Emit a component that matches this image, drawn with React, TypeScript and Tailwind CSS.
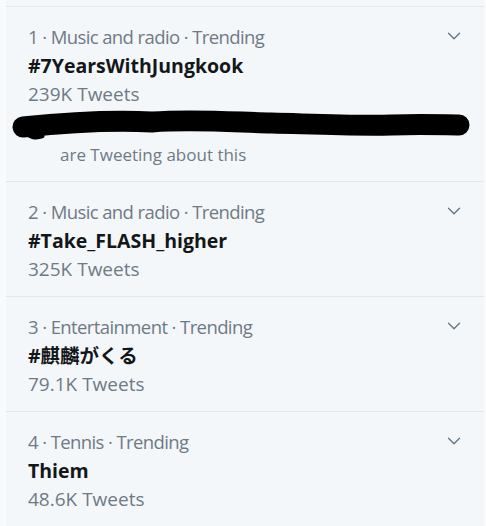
import { ChevronDown } from 'lucide-react';

type Trend = {
  rank: number;
  category: string;
  name: string;
  tweets: string;
  extra?: boolean;
};

const trends: Trend[] = [
  { rank: 1, category: 'Music and radio', name: '#7YearsWithJungkook', tweets: '239K Tweets', extra: true },
  { rank: 2, category: 'Music and radio', name: '#Take_FLASH_higher', tweets: '325K Tweets' },
  { rank: 3, category: 'Entertainment', name: '#麒麟がくる', tweets: '79.1K Tweets' },
  { rank: 4, category: 'Tennis', name: 'Thiem', tweets: '48.6K Tweets' },
];

// hand-drawn redaction over the "followed by" line
function Scribble() {
  return (
    <svg width="470" height="31" viewBox="0 0 470 31" className="block">
      <path
        d="M11 18 C50 14 100 11 140 13 C180 10 220 13 260 14 C300 15 340 17 380 16 C410 15 435 16 447 16"
        fill="none"
        stroke="#000"
        strokeWidth="21"
        strokeLinecap="round"
      />
      <path d="M30 10 C60 6 110 7 140 8" fill="none" stroke="#000" strokeWidth="6" strokeLinecap="round" />
      <path d="M14 22 C16 28 24 29 30 27" fill="none" stroke="#000" strokeWidth="5" strokeLinecap="round" />
    </svg>
  );
}

function TrendRow({ trend }: { trend: Trend }) {
  return (
    <div className="relative border-b border-[#e1e8ed] pt-[15px] pb-[12px] pl-[22px] pr-[20px]">
      <div className="text-[18.5px] leading-[29px] tracking-[-0.6px] text-[#6e7a86]">
        {trend.rank} · {trend.category} · Trending
      </div>
      <div className="text-[19.5px] leading-[29px] font-bold text-[#14171a]">{trend.name}</div>
      <div className="text-[19px] leading-[29px] text-[#6e7a86]">{trend.tweets}</div>
      {trend.extra && (
        <>
          <div className="-ml-[16px] h-[31px]">
            <Scribble />
          </div>
          <div className="pl-[32px] text-[17px] leading-[29px] text-[#6e7a86]">are Tweeting about this</div>
        </>
      )}
      <ChevronDown
        size={22}
        strokeWidth={1.5}
        className="absolute right-[19px] top-[18px] text-[#657786]"
      />
    </div>
  );
}

export default function App() {
  return (
    <div
      className="h-[526px] w-[486px] overflow-hidden bg-[#f8fafb]"
      style={{ fontFamily: '"Open Sans", "Noto Sans CJK JP", sans-serif' }}
    >
      <div className="ml-[6px] mr-[2px] h-full bg-[#f4f7f9]">
        <div className="h-[7px] border-b border-[#e1e8ed]" />
        {trends.map((t) => (
          <TrendRow key={t.rank} trend={t} />
        ))}
      </div>
    </div>
  );
}
